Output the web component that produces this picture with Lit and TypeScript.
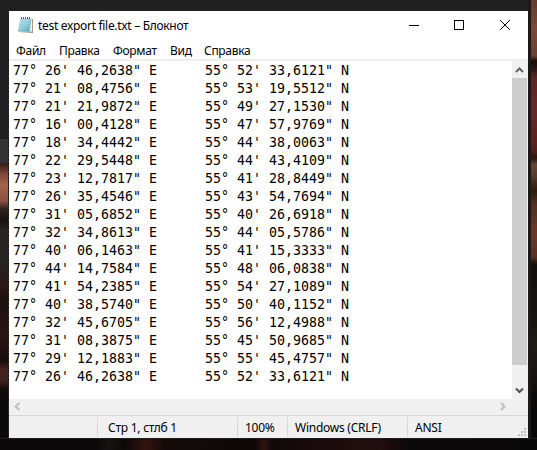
import { LitElement, html, css, svg } from "lit";
import { customElement } from "lit/decorators.js";

const LINES: [string, string][] = [
  ["77° 26' 46,2638\" E", "55° 52' 33,6121\" N"],
  ["77° 21' 08,4756\" E", "55° 53' 19,5512\" N"],
  ["77° 21' 21,9872\" E", "55° 49' 27,1530\" N"],
  ["77° 16' 00,4128\" E", "55° 47' 57,9769\" N"],
  ["77° 18' 34,4442\" E", "55° 44' 38,0063\" N"],
  ["77° 22' 29,5448\" E", "55° 44' 43,4109\" N"],
  ["77° 23' 12,7817\" E", "55° 41' 28,8449\" N"],
  ["77° 26' 35,4546\" E", "55° 43' 54,7694\" N"],
  ["77° 31' 05,6852\" E", "55° 40' 26,6918\" N"],
  ["77° 32' 34,8613\" E", "55° 44' 05,5786\" N"],
  ["77° 40' 06,1463\" E", "55° 41' 15,3333\" N"],
  ["77° 44' 14,7584\" E", "55° 48' 06,0838\" N"],
  ["77° 41' 54,2385\" E", "55° 54' 27,1089\" N"],
  ["77° 40' 38,5740\" E", "55° 50' 40,1152\" N"],
  ["77° 32' 45,6705\" E", "55° 56' 12,4988\" N"],
  ["77° 31' 08,3875\" E", "55° 45' 50,9685\" N"],
  ["77° 29' 12,1883\" E", "55° 55' 45,4757\" N"],
  ["77° 26' 46,2638\" E", "55° 52' 33,6121\" N"],
];

const GRIP = [[6, 0], [3, 3], [6, 3], [0, 6], [3, 6], [6, 6]];

@customElement("app-root")
export class AppRoot extends LitElement {
  static styles = css`
    :host {
      display: grid;
      grid-template-columns: 9px 519px 9px;
      grid-template-rows: 11px 427px 12px;
      width: 537px;
      height: 450px;
      overflow: hidden;
      background: #202020;
      color: #000;
      font: 12px/16px "Noto Sans", "Open Sans", sans-serif;
    }
    .left {
      grid-area: 2 / 1 / 4 / 2;
      background: linear-gradient(#202020 0 128px, #333 128px 151px, #3a1c14 153px, #7d4838 163px,
        #a4644c 174px, #8a5140 190px, #2d2220 198px, #171413 210px, #2b2523 220px, #272522 250px,
        #2c1714 275px, #1d1110 290px, #2b1412 325px, #170e0d 350px, #43241f 358px, #3f211d 370px,
        #120d0c 378px, #0b0909 390px, #0b0909);
      border-right: 1px solid #24211f;
      box-sizing: border-box;
    }
    .right {
      grid-area: 1 / 3 / 4 / 4;
      border-left: 3px solid #1c1a19;
      background: linear-gradient(#643a2c 0, #7c4936 30px, #6b3f31 56px, #160f0e 61px, #2a1512 68px,
        #5c2421 76px, #682a28 110px, #561f1e 150px, #2b1613 158px, #65483b 165px, #5b3a2d 176px,
        #2c1a13 190px, #54301f 205px, #6b3a29 235px, #55301f 258px, #14100e 264px, #17130f 320px,
        #201c18 345px, #15120f 380px, #080707 410px, #080707);
    }
    .bottom {
      grid-area: 3 / 1 / 4 / 4;
      z-index: 1;
      background: linear-gradient(90deg, #0b0809 0 95px, #181313 108px, #0d0909 125px, #341311 145px,
        #150a0a 165px, #0d0808 255px, #32130f 264px, #100909 272px, #1d0c0d 330px, #220d0f 380px,
        #0c090a 410px, #090808);
      border-top: 1px solid #1d1d1d;
      box-sizing: border-box;
    }
    .window {
      grid-area: 2 / 2;
      display: flex;
      flex-direction: column;
      background: #fff;
    }
    .title {
      display: flex;
      height: 30px;
      align-items: flex-start;
    }
    .logo { margin: 5px 0 0 8px; width: 17px; height: 18px; }
    .name { margin: 7px 0 0 4px; width: 250px; white-space: nowrap; letter-spacing: -0.31px; }
    .controls { display: flex; margin-left: auto; }
    .controls svg { width: 46px; height: 28px; }
    .menu { display: flex; height: 18px; padding-left: 7px; box-sizing: border-box; white-space: nowrap; letter-spacing: -0.3px; }
    .menu span { line-height: 19px; }
    .file { width: 43px; }
    .edit { width: 54px; }
    .format { width: 57px; }
    .view { width: 34px; }
    .body {
      display: flex;
      height: 340px;
      border-top: 2px solid #f0f0f0;
      box-sizing: border-box;
    }
    .text {
      flex: 1;
      padding: 1px 0 0 4px;
      font: 13.29px/18px "DejaVu Sans Mono", "Liberation Mono", monospace;
    }
    .row { display: flex; height: 18px; white-space: pre; }
    .east { width: 192px; }
    .vbar { width: 16px; background: #f0f0f0; display: flex; flex-direction: column; justify-content: space-between; }
    .vbar svg { width: 15px; height: 17px; }
    .thumb { width: 15px; height: 287px; margin-bottom: auto; background: #cdcdcd; }
    .hbar { height: 16px; display: flex; justify-content: space-between; background: #f0f0f0; padding-right: 16px; }
    .hbar svg { width: 17px; height: 16px; }
    .status {
      display: flex;
      height: 23px;
      box-sizing: border-box;
      border-top: 1px solid #d7d7d7;
      background: #f0f0f0;
      padding-top: 1px;
      white-space: nowrap;
      letter-spacing: -0.25px;
    }
    .status span {
      height: 20px;
      line-height: 22px;
      box-sizing: border-box;
      border-left: 1px solid #d7d7d7;
    }
    .status .blank { width: 88px; border: 0; }
    .pos { width: 140px; padding-left: 10px; }
    .zoom { width: 50px; padding-left: 7px; }
    .eol { width: 120px; padding-left: 7px; }
    .enc { padding-left: 7px; }
    .grip { margin: 11px 2px 0 auto; width: 8px; height: 8px; }
  `;

  render() {
    return html`
      <div class="left"></div>
      <div class="right"></div>
      <div class="bottom"></div>
      <div class="window">
        <div class="title">
          <svg class="logo" viewBox="0 0 17 18">
            <defs>
              <linearGradient id="page" x1="0" y1="0" x2="1" y2="1">
                <stop offset="0" stop-color="#b5dfe8" />
                <stop offset=".5" stop-color="#8dcbd8" />
                <stop offset="1" stop-color="#459fb4" />
              </linearGradient>
            </defs>
            <path d="M14 3L16 3L16 17L3 17L14 15Z" fill="#a99c7c" />
            <path d="M3.5 2.5H15V15.5H13L12 16.5H2Z" fill="#f4f0df" />
            <path d="M3.2 2.5H14.5L12.6 15.8H.8Z" fill="url(#page)" />
            <path d="M3 5H13.5M2.7 7.3H13.2M2.4 9.6H12.9M2 12H12.6" stroke="#b4dde5" stroke-width=".5" />
            <path d="M4.5 1V3M6.5 1V3M8.5 1V3M10.5 1V3M12.5 1V3" stroke="#39565e" stroke-width=".9" />
          </svg>
          <span class="name">test export file.txt – Блокнот</span>
          <div class="controls">
            <svg viewBox="0 0 46 28" shape-rendering="crispEdges"><path d="M19 14.5H29" stroke="#000" /></svg>
            <svg viewBox="0 0 46 28" shape-rendering="crispEdges"><path d="M18.5 9.5H27.5V18.5H18.5Z" fill="none" stroke="#000" /></svg>
            <svg viewBox="0 0 46 28"><path d="M18.2 9.2L27.8 18.8M27.8 9.2L18.2 18.8" stroke="#000" /></svg>
          </div>
        </div>
        <div class="menu">
          <span class="file">Файл</span><span class="edit">Правка</span><span class="format">Формат</span
          ><span class="view">Вид</span><span>Справка</span>
        </div>
        <div class="body">
          <div class="text">
            ${LINES.map(([east, north]) => html`<div class="row"><span class="east">${east}</span><span>${north}</span></div>`)}
          </div>
          <div class="vbar">
            <svg viewBox="0 0 15 17"><path d="M4 11L7.5 7.5L11 11" fill="none" stroke="#606060" stroke-width="2" /></svg>
            <div class="thumb"></div>
            <svg viewBox="0 0 15 17"><path d="M4 6.5L7.5 10L11 6.5" fill="none" stroke="#505050" stroke-width="2" /></svg>
          </div>
        </div>
        <div class="hbar">
          <svg viewBox="0 0 17 16"><path d="M10.5 4L6.5 7.5L10.5 11" fill="none" stroke="#bfbfbf" stroke-width="2" /></svg>
          <svg viewBox="0 0 17 16"><path d="M6 4L9.5 7.5L6 11" fill="none" stroke="#bfbfbf" stroke-width="2" /></svg>
        </div>
        <div class="status">
          <span class="blank"></span><span class="pos">Стр 1, стлб 1</span><span class="zoom">100%</span
          ><span class="eol">Windows (CRLF)</span><span class="enc">ANSI</span>
          <svg class="grip" viewBox="0 0 8 8" shape-rendering="crispEdges">
            ${GRIP.map(([x, y]) => svg`<rect x=${x} y=${y} width="2" height="2" fill="#bfbfbf" />`)}
          </svg>
        </div>
      </div>
    `;
  }
}
